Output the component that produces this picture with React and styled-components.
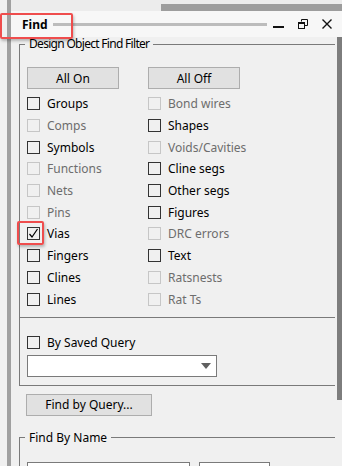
import React from "react";
import styled, { createGlobalStyle } from "styled-components";

const GlobalStyle = createGlobalStyle`
  html, body { margin: 0; padding: 0; }
  body {
    background: #f0f0f0;
    font-family: "Noto Sans", "Open Sans", sans-serif;
    font-size: 12px;
    color: #000;
  }
`;

const Window = styled.div`
  position: relative;
  display: flex;
  width: 342px;
  height: 466px;
  overflow: hidden;
  background: #f0f0f0;
`;

const Gutter = styled.div`
  flex: none;
  width: 7px;
`;

const Splitter = styled.div`
  flex: none;
  width: 4px;
  background: #a0a0a0;
`;

const Main = styled.div`
  flex: 1;
  min-width: 0;
  display: flex;
  flex-direction: column;
`;

const TopStrip = styled.div`
  flex: none;
  height: 11px;
  box-sizing: border-box;
  padding: 4px 0 0 150px;
  background: #ececec;
`;

const TopBand = styled.div`
  height: 7px;
  background: #9d9d9d;
`;

const TitleBar = styled.div`
  flex: none;
  height: 26px;
  display: flex;
  align-items: center;
  padding: 0 10px 0 11px;
  background: #f7f7f7;
`;

const Title = styled.span`
  font-weight: bold;
  font-size: 12px;
`;

const Gripper = styled.div`
  flex: 1;
  height: 3px;
  margin: 0 6px 0 5px;
  background: #bcbcbc;
`;

const TitleIcons = styled.div`
  display: flex;
  align-items: center;
  gap: 14px;
`;

const Body = styled.div`
  flex: 1;
  display: flex;
  min-height: 0;
`;

const Content = styled.div`
  flex: 1;
  min-width: 0;
  display: flex;
  flex-direction: column;
  align-items: flex-start;
`;

const Scrollbar = styled.div`
  flex: none;
  width: 5px;
  display: flex;
  flex-direction: column;
`;

const Thumb = styled.div`
  height: 363px;
  background: #7d7d7d;
`;

const GroupBox = styled.fieldset`
  align-self: stretch;
  margin: 0 2px 0 8px;
  padding: 0;
  min-width: 0;
  border: 1px solid #7a7a7a;
  border-right: none;
  border-bottom: ${(p) => (p.$open ? "none" : "1px solid #7a7a7a")};
`;

const Legend = styled.legend`
  margin-left: 5px;
  padding: 0 4px;
  line-height: 14px;
  font-size: 12px;
  letter-spacing: ${(p) => (p.$tight ? "-0.7px" : "normal")};
`;

const Filter = styled.div`
  display: flex;
  flex-direction: column;
  padding: 16px 0 7px 7px;
`;

const ButtonRow = styled.div`
  display: grid;
  grid-template-columns: 121px 1fr;
  margin-bottom: 4px;
`;

const CheckGrid = styled.div`
  display: grid;
  grid-template-columns: 121px 1fr;
  grid-auto-rows: 21.7px;
`;

const Button = styled.button`
  box-sizing: border-box;
  width: ${(p) => p.$w}px;
  height: 22px;
  padding: 0;
  background: #e1e1e1;
  border: 1px solid #adadad;
  font-family: inherit;
  font-size: 12px;
  color: #000;
`;

const Row = styled.label`
  display: flex;
  align-items: center;
  gap: 7px;
  color: ${(p) => (p.$disabled ? "#6d6d6d" : "#000")};
  white-space: nowrap;
`;

const Box = styled.span`
  box-sizing: border-box;
  flex: none;
  width: 13px;
  height: 13px;
  border: 1px solid ${(p) => (p.$disabled ? "#c6c6c6" : "#333")};
  display: flex;
  align-items: center;
  justify-content: center;
`;

const QuerySection = styled.div`
  border-top: 1px solid #7a7a7a;
  padding: 14px 0 8px 7px;
  display: flex;
  flex-direction: column;
  gap: 1px;
`;

const QueryRow = styled(Row)`
  height: 22px;
`;

const Combo = styled.div`
  box-sizing: border-box;
  width: 190px;
  height: 22px;
  background: #fff;
  border: 1px solid #7a7a7a;
  display: flex;
  align-items: center;
  justify-content: flex-end;
  padding-right: 5px;
`;

const QueryButtonWrap = styled.div`
  margin: 8px 0 0 15px;
`;

const NameGroup = styled(GroupBox)`
  margin-top: 15px;
`;

const NameFields = styled.div`
  display: flex;
  gap: 9px;
  padding: 17px 0 0 7px;
`;

const Field = styled.div`
  box-sizing: border-box;
  width: ${(p) => p.$w}px;
  height: 22px;
  background: #fff;
  border: 1px solid #7a7a7a;
`;

const Highlight = styled.div`
  position: absolute;
  box-sizing: border-box;
  border: 2.5px solid #ef4d4d;
  border-radius: 2px;
  box-shadow: 1px 2px 3px rgba(0, 0, 0, 0.25);
  pointer-events: none;
`;

const left = [
  ["Groups"], ["Comps", true], ["Symbols"], ["Functions", true], ["Nets", true],
  ["Pins", true], ["Vias", false, true], ["Fingers"], ["Clines"], ["Lines"],
];
const right = [
  ["Bond wires", true], ["Shapes"], ["Voids/Cavities", true], ["Cline segs"], ["Other segs"],
  ["Figures"], ["DRC errors", true], ["Text"], ["Ratsnests", true], ["Rat Ts", true],
];

function Check({ label, disabled, checked }) {
  return (
    <Row $disabled={disabled}>
      <Box $disabled={disabled}>
        {checked && (
          <svg width="11" height="11" viewBox="0 0 11 11">
            <path d="M1.5 6 L4 9 L9.5 1" fill="none" stroke="#000" strokeWidth="1.2" />
          </svg>
        )}
      </Box>
      {label}
    </Row>
  );
}

function FilterPanel() {
  const rows = [];
  left.forEach((l, i) => {
    rows.push(<Check key={"l" + i} label={l[0]} disabled={l[1]} checked={l[2]} />);
    const r = right[i];
    rows.push(<Check key={"r" + i} label={r[0]} disabled={r[1]} />);
  });
  return (
    <Filter>
      <ButtonRow>
        <Button $w={92}>All On</Button>
        <Button $w={92}>All Off</Button>
      </ButtonRow>
      <CheckGrid>{rows}</CheckGrid>
    </Filter>
  );
}

export default function App() {
  return (
    <>
      <GlobalStyle />
      <Window>
        <Gutter />
        <Splitter />
        <Main>
          <TopStrip><TopBand /></TopStrip>
          <TitleBar>
            <Title>Find</Title>
            <Gripper />
            <TitleIcons>
              <svg width="11" height="10" viewBox="0 0 11 10">
                <rect x="0" y="7" width="11" height="2" fill="#111" />
              </svg>
              <svg width="10" height="10" viewBox="0 0 10 10">
                <path d="M3.5 2.5 V0.5 H9.5 V6.5 H6.5" fill="none" stroke="#111" strokeWidth="1" />
                <rect x="0.5" y="3.5" width="6" height="6" fill="none" stroke="#111" strokeWidth="1" />
                <rect x="0.5" y="3.5" width="6" height="1.5" fill="#111" />
              </svg>
              <svg width="10" height="10" viewBox="0 0 10 10">
                <path d="M0.5 0.5 L9.5 9.5 M9.5 0.5 L0.5 9.5" stroke="#111" strokeWidth="1.4" />
              </svg>
            </TitleIcons>
          </TitleBar>
          <Body>
            <Content>
              <GroupBox>
                <Legend $tight>Design Object Find Filter</Legend>
                <FilterPanel />
                <QuerySection>
                  <QueryRow>
                    <Box />
                    By Saved Query
                  </QueryRow>
                  <Combo>
                    <svg width="10" height="6" viewBox="0 0 10 6">
                      <path d="M0 0 H10 L5 6 Z" fill="#606060" />
                    </svg>
                  </Combo>
                </QuerySection>
              </GroupBox>
              <QueryButtonWrap>
                <Button $w={126}>Find by Query...</Button>
              </QueryButtonWrap>
              <NameGroup $open>
                <Legend>Find By Name</Legend>
                <NameFields>
                  <Field $w={163} />
                  <Field $w={71} />
                </NameFields>
              </NameGroup>
            </Content>
            <Scrollbar>
              <Thumb />
            </Scrollbar>
          </Body>
        </Main>
        <Highlight style={{ left: 0, top: 13, width: 73, height: 26 }} />
        <Highlight style={{ left: 17, top: 221, width: 27, height: 24 }} />
      </Window>
    </>
  );
}
